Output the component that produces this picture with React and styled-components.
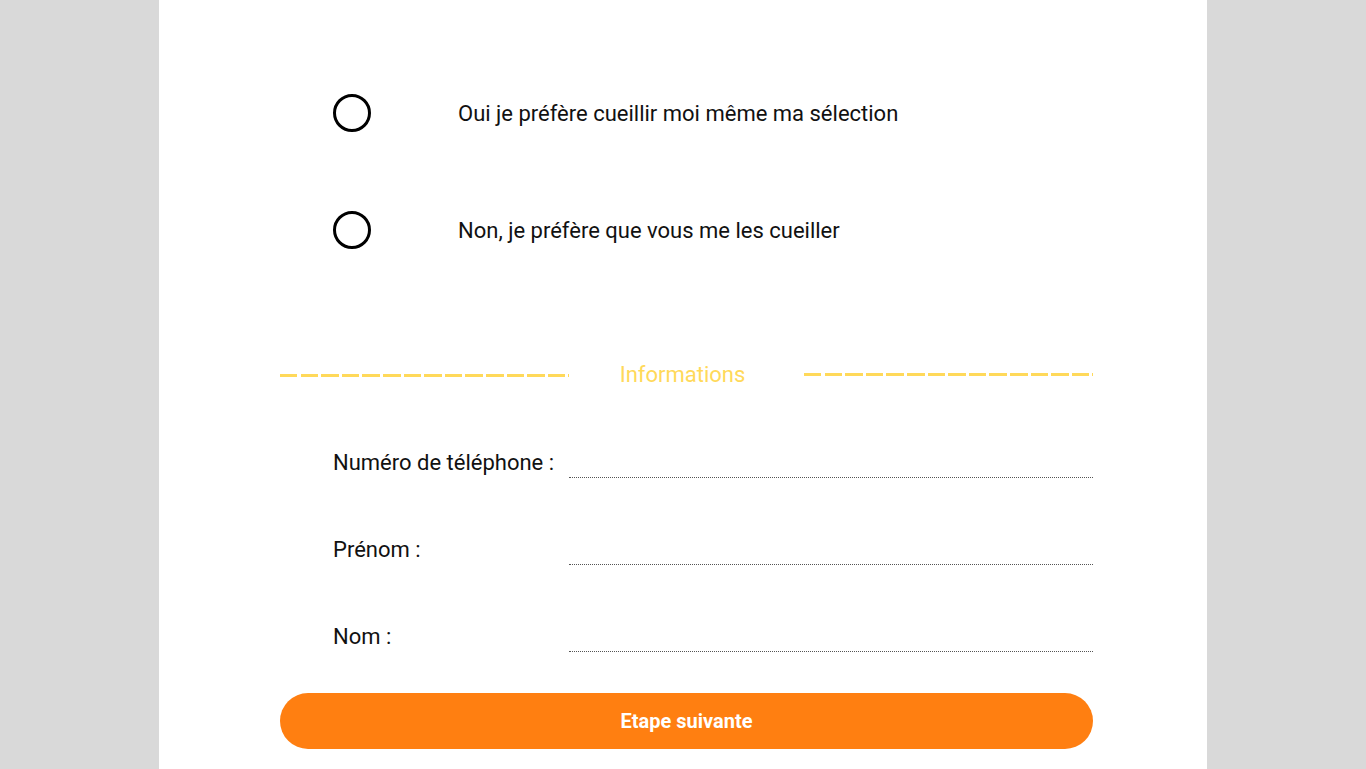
import React from 'react';
import styled, { createGlobalStyle } from 'styled-components';

const GlobalStyle = createGlobalStyle`
	html, body {
		margin: 0;
		padding: 0;
		background: #d9d9d9;
		font-family: Roboto, 'Liberation Sans', sans-serif;
	}
`;

const Sheet = styled.main`
	width: 1048px;
	min-height: 769px;
	margin: 0 auto;
	background: #ffffff;
	box-sizing: border-box;
	padding: 94px 114px 0 121px;
`;

const RadioList = styled.div`
	display: flex;
	flex-direction: column;
	gap: 79px;
	padding-left: 53px;
`;

const RadioRow = styled.label`
	display: flex;
	align-items: center;
	gap: 87px;
	height: 38px;
	font-size: 22px;
	color: #111;
	cursor: pointer;
`;

const RadioCircle = styled.span`
	width: 38px;
	height: 38px;
	box-sizing: border-box;
	border: 3px solid #000;
	border-radius: 50%;
	flex-shrink: 0;
`;

const Divider = styled.div`
	display: flex;
	align-items: center;
	margin-top: 113px;
	height: 24px;
`;

const Dashes = styled.span`
	width: 289px;
	height: 3px;
	margin-top: ${props => props.$offset || 0}px;
	background: repeating-linear-gradient(90deg, #ffd95a 0 17.5px, transparent 17.5px 20.6px);
`;

const DividerTitle = styled.span`
	flex: 1;
	text-align: center;
	font-size: 22px;
	color: #ffd95a;
	padding-right: 8px;
`;

const Fields = styled.div`
	display: flex;
	flex-direction: column;
	gap: 57px;
	margin-top: 62px;
	padding-left: 53px;
`;

const FieldRow = styled.div`
	display: flex;
	height: 30px;
`;

const FieldLabel = styled.span`
	width: 236px;
	line-height: 30px;
	font-size: 22px;
	color: #111;
`;

const FieldInput = styled.input`
	flex: 1;
	border: none;
	border-bottom: 1px dotted #555;
	background: transparent;
	outline: none;
	font: inherit;
	font-size: 20px;
	padding: 0;
`;

const NextButton = styled.button`
	display: block;
	width: 813px;
	height: 56px;
	margin-top: 41px;
	border: none;
	border-radius: 28px;
	background: #ff7f11;
	color: #ffffff;
	font-family: Roboto, 'Liberation Sans', sans-serif;
	font-size: 20px;
	font-weight: 700;
	cursor: pointer;
`;

const options = ['Oui je préfère cueillir moi même ma sélection', 'Non, je préfère que vous me les cueiller'];

const fields = ['Numéro de téléphone :', 'Prénom :', 'Nom :'];

const App = () => {
	return (
		<>
			<GlobalStyle />
			<Sheet>
				<RadioList>
					{options.map(option => (
						<RadioRow key={option}>
							<RadioCircle />
							{option}
						</RadioRow>
					))}
				</RadioList>

				<Divider>
					<Dashes $offset={3} />
					<DividerTitle>Informations</DividerTitle>
					<Dashes />
				</Divider>

				<Fields>
					{fields.map(label => (
						<FieldRow key={label}>
							<FieldLabel>{label}</FieldLabel>
							<FieldInput type='text' />
						</FieldRow>
					))}
				</Fields>

				<NextButton>Etape suivante</NextButton>
			</Sheet>
		</>
	);
};

export default App;
